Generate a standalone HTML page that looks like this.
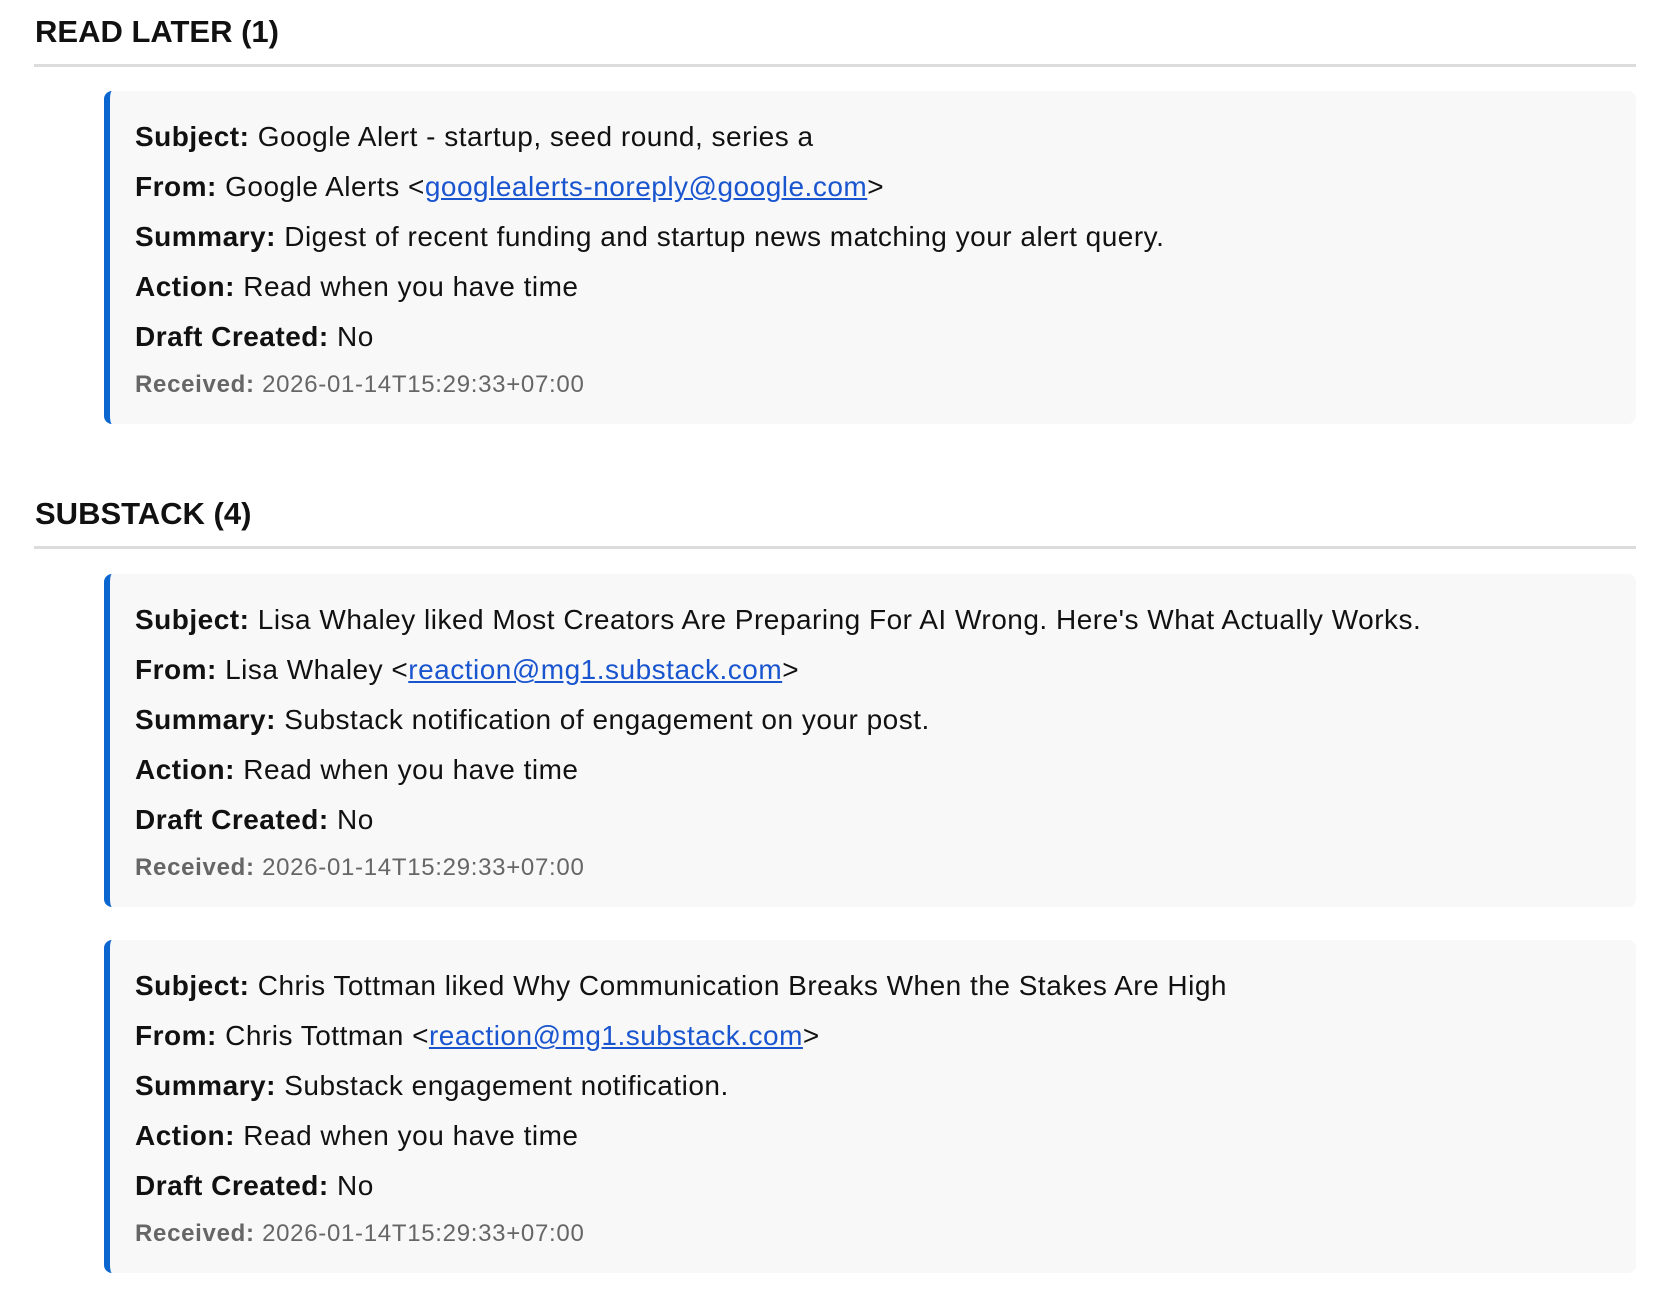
<!DOCTYPE html>
<html><head><meta charset="utf-8"><style>
body{margin:0;width:1664px;height:1294px;background:#fff;font-family:"Liberation Sans",Arial,sans-serif;color:#111;position:relative;overflow:hidden}
h2{position:absolute;left:35px;margin:0;font-size:31px;font-weight:bold;line-height:40px;color:#111}
.rule{position:absolute;left:34px;width:1602px;height:3px;background:#dcdcdc}
.card{position:absolute;left:104px;width:1532px;height:333px;background:#f8f8f8;border-left:6px solid #0b66d0;border-radius:8px;box-sizing:border-box;padding:21px 0 0 25px}
.l{font-size:28px;letter-spacing:0.5px;line-height:50px;white-space:nowrap}
.r{font-size:24px;letter-spacing:0.7px;line-height:46px;color:#666;white-space:nowrap}
b{font-weight:bold}
a{color:#1a55d0;text-decoration:underline}
</style></head><body>
<h2 style="top:12px">READ LATER (1)</h2>
<div class="rule" style="top:64px"></div>
<div class="card" style="top:91px">
<div class="l"><b>Subject:</b> Google Alert - startup, seed round, series a</div>
<div class="l"><b>From:</b> Google Alerts &lt;<a>googlealerts-noreply@google.com</a>&gt;</div>
<div class="l"><b>Summary:</b> Digest of recent funding and startup news matching your alert query.</div>
<div class="l"><b>Action:</b> Read when you have time</div>
<div class="l"><b>Draft Created:</b> No</div>
<div class="r"><b>Received:</b> 2026-01-14T15:29:33+07:00</div>
</div>
<h2 style="top:494px">SUBSTACK (4)</h2>
<div class="rule" style="top:546px"></div>
<div class="card" style="top:574px">
<div class="l"><b>Subject:</b> Lisa Whaley liked Most Creators Are Preparing For AI Wrong. Here's What Actually Works.</div>
<div class="l"><b>From:</b> Lisa Whaley &lt;<a>reaction@mg1.substack.com</a>&gt;</div>
<div class="l"><b>Summary:</b> Substack notification of engagement on your post.</div>
<div class="l"><b>Action:</b> Read when you have time</div>
<div class="l"><b>Draft Created:</b> No</div>
<div class="r"><b>Received:</b> 2026-01-14T15:29:33+07:00</div>
</div>
<div class="card" style="top:940px">
<div class="l"><b>Subject:</b> Chris Tottman liked Why Communication Breaks When the Stakes Are High</div>
<div class="l"><b>From:</b> Chris Tottman &lt;<a>reaction@mg1.substack.com</a>&gt;</div>
<div class="l"><b>Summary:</b> Substack engagement notification.</div>
<div class="l"><b>Action:</b> Read when you have time</div>
<div class="l"><b>Draft Created:</b> No</div>
<div class="r"><b>Received:</b> 2026-01-14T15:29:33+07:00</div>
</div>
</body></html>
